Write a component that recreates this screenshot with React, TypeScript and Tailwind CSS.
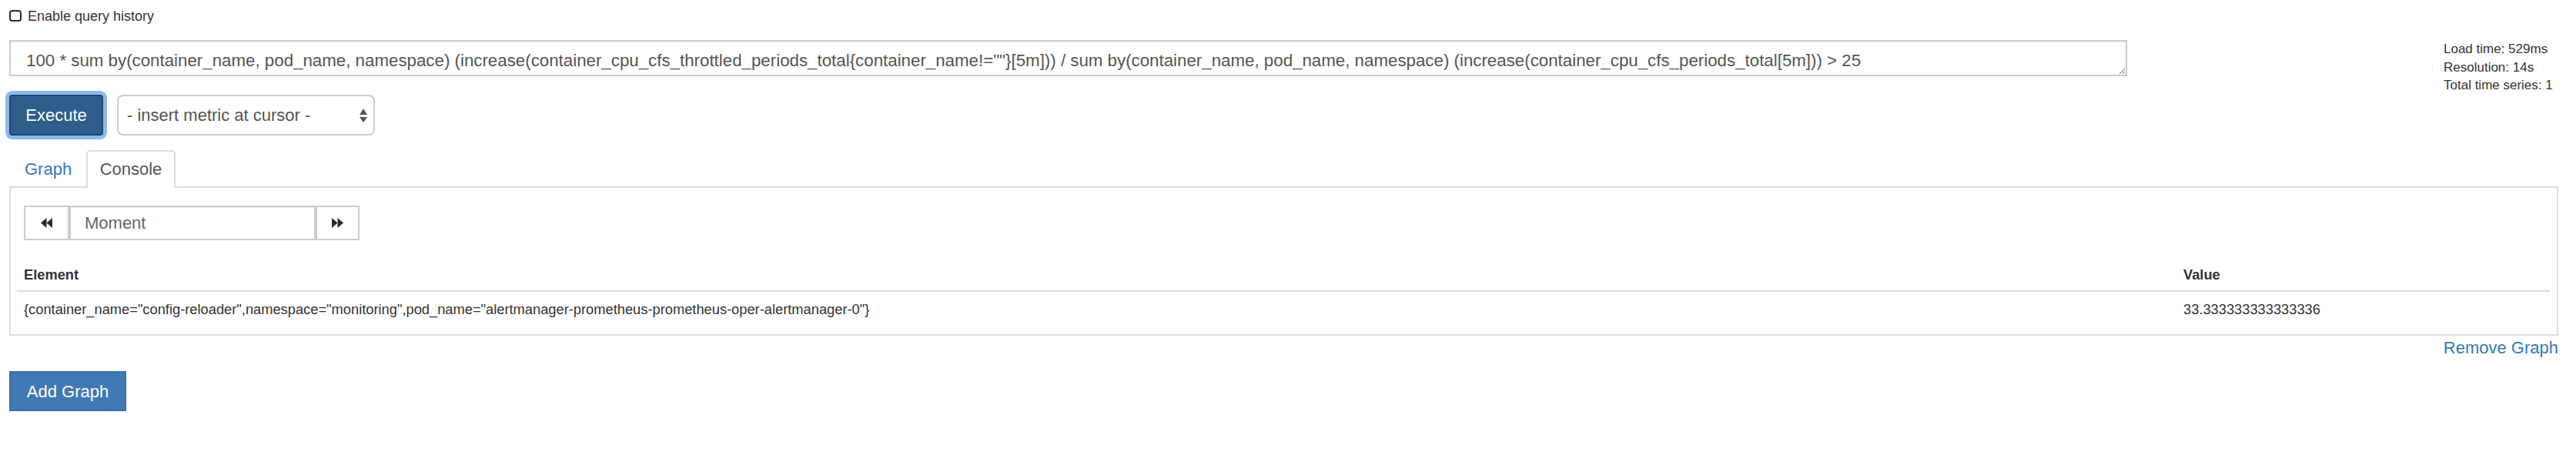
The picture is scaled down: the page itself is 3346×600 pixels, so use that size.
import React from "react";

const QUERY =
  '100 * sum by(container_name, pod_name, namespace) (increase(container_cpu_cfs_throttled_periods_total{container_name!=""}[5m])) / sum by(container_name, pod_name, namespace) (increase(container_cpu_cfs_periods_total[5m])) > 25';

function Backward() {
  return (
    <svg width="15" height="13" viewBox="0 0 15 13" fill="#2b2b2b">
      <polygon points="7.5,0 0,6.5 7.5,13" />
      <polygon points="15,0 7.5,6.5 15,13" />
    </svg>
  );
}

function Forward() {
  return (
    <svg width="15" height="13" viewBox="0 0 15 13" fill="#2b2b2b">
      <polygon points="0,0 7.5,6.5 0,13" />
      <polygon points="7.5,0 15,6.5 7.5,13" />
    </svg>
  );
}

export default function App() {
  return (
    <div className="w-[3346px] h-[600px] bg-white text-[#333] font-['Liberation_Sans',Arial,sans-serif] pl-[12px] pr-[23px]">
      {/* query history */}
      <div className="h-[41px] flex items-center gap-[8px]">
        <div className="w-[16px] h-[15px] rounded-[4px] border-[2.5px] border-[#2b2b2b] bg-white" />
        <span className="text-[18px] leading-[20px]">Enable query history</span>
      </div>

      <div className="mt-[11px] flex items-start">
        <div className="w-[2751px]">
          <textarea
            readOnly
            rows={1}
            value={QUERY}
            className="block w-full h-[47px] border-2 border-[#cccccc] bg-white text-[22.3px] leading-[31px] text-[#555] pl-[20px] pr-[12px] pt-[9px] pb-0 shadow-[inset_0_1px_1px_rgba(0,0,0,0.075)] resize outline-none"
          />
          <div className="mt-[24px] flex items-center gap-[18px]">
            <button className="w-[122px] h-[53px] rounded-[4px] bg-[#2f5e8b] border-2 border-[#1f4670] text-white text-[22px] leading-[31px] shadow-[0_0_0_5px_#8db8f0]">
              Execute
            </button>
            <div className="w-[335px] h-[53px] rounded-[8px] border-2 border-[#cccccc] bg-white flex items-center pl-[11px] pr-[8px] text-[22px] text-[#555]">
              <span className="flex-1 leading-[31px]">- insert metric at cursor -</span>
              <svg width="10" height="18" viewBox="0 0 10 18" fill="#555">
                <polygon points="5,0 10,8 0,8" />
                <polygon points="0,11 10,11 5,18" />
              </svg>
            </div>
          </div>
        </div>
        <div className="ml-[411px] text-[17px] leading-[23.6px] text-[#333]">
          <div>Load time: 529ms</div>
          <div>Resolution: 14s</div>
          <div>Total time series: 1</div>
        </div>
      </div>

      {/* tabs */}
      <div className="mt-[19px] flex items-end">
        <div className="h-[47px] w-[97px] ml-[1px] pt-[7px] pl-[17px] text-[22px] leading-[31px] text-[#337ab7] border-2 border-transparent">
          Graph
        </div>
        <div className="relative z-10 -mb-[2px] ml-[2px] h-[49px] w-[116px] pt-[7px] text-center text-[22px] leading-[31px] text-[#555] bg-white border-2 border-b-0 border-[#dddddd] rounded-t-[5px]">
          Console
        </div>
      </div>

      {/* tab content */}
      <div className="border-2 border-[#dddddd] pt-[23px] pl-[8px] pr-[9px] pb-[10px]">
        <div className="ml-[9px] flex h-[45px] w-[436px]">
          <div className="w-[59px] h-full border-2 border-[#cccccc] bg-white flex items-center justify-center">
            <Backward />
          </div>
          <div className="w-[320px] h-full border-2 border-[#cccccc] bg-white flex items-center pl-[18px] text-[22px] text-[#666] shadow-[inset_0_1px_1px_rgba(0,0,0,0.075)]">
            Moment
          </div>
          <div className="w-[57px] h-full border-2 border-[#cccccc] bg-white flex items-center justify-center">
            <Forward />
          </div>
        </div>

        <div className="mt-[24px] text-[18.3px] leading-[25.7px]">
          <div className="grid grid-cols-[2805px_1fr] border-b-2 border-[#dddddd] font-bold">
            <div className="pl-[9px] pt-[8px] pb-[7px]">Element</div>
            <div className="pl-[9px] pt-[8px] pb-[7px]">Value</div>
          </div>
          <div className="grid grid-cols-[2805px_1fr]">
            <div className="pl-[9px] pt-[10px] pb-[10px]">
              {'{container_name="config-reloader",namespace="monitoring",pod_name="alertmanager-prometheus-prometheus-oper-alertmanager-0"}'}
            </div>
            <div className="pl-[9px] pt-[10px] pb-[10px]">33.333333333333336</div>
          </div>
        </div>
      </div>

      <div className="flex justify-end">
        <span className="text-[22px] leading-[31px] text-[#337ab7]">Remove Graph</span>
      </div>

      <div className="mt-[15px]">
        <button className="w-[152px] h-[52px] bg-[#4079b4] border-2 border-[#3a6ea6] text-white text-[22px] leading-[31px]">
          Add Graph
        </button>
      </div>
    </div>
  );
}
